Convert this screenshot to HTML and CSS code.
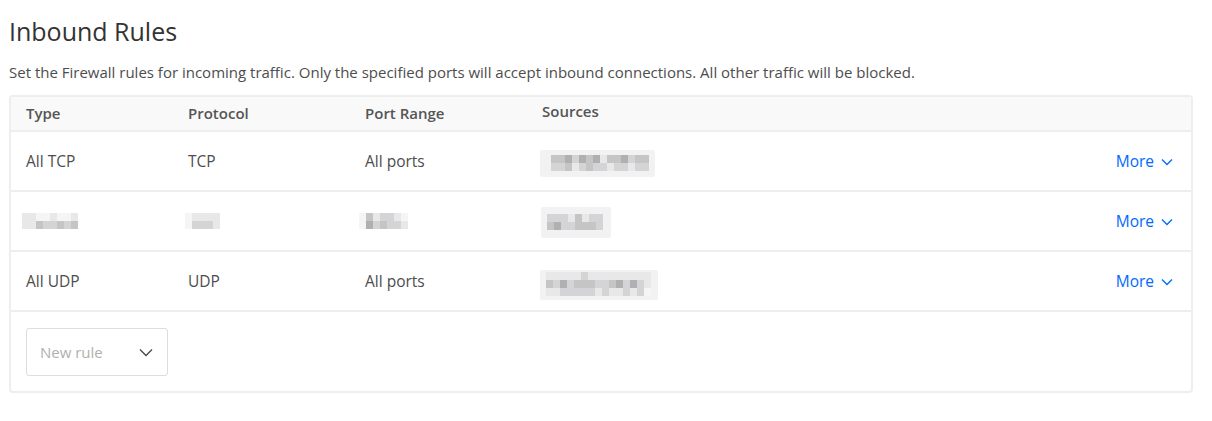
FILE: index.html
```html
<!DOCTYPE html>
<html>
<head>
<meta charset="utf-8">
<link rel="stylesheet" href="styles.css">
</head>
<body>
<div class="page">
  <h1 class="title">Inbound Rules</h1>
  <p class="desc">Set the Firewall rules for incoming traffic. Only the specified ports will accept inbound connections. All other traffic will be blocked.</p>
  <div class="table">
    <div class="row head">
      <div class="c type">Type</div>
      <div class="c proto">Protocol</div>
      <div class="c port">Port Range</div>
      <div class="c src src-h">Sources</div>
      <div class="c more"></div>
    </div>
    <div class="row">
      <div class="c type">All TCP</div>
      <div class="c proto">TCP</div>
      <div class="c port">All ports</div>
      <div class="c src">
        <div class="chip chip1">
          <div class="pix">
            <i class="g2"></i><i class="g2"></i><i class="g3"></i><i class="g1"></i><i class="g3"></i><i class="g2"></i><i class="g3"></i><i class="g0"></i><i class="g2"></i><i class="g2"></i><i class="g3"></i><i class="g1"></i><i class="g2"></i><i class="g2"></i>
            <i class="g1"></i><i class="g1"></i><i class="g2"></i><i class="g0"></i><i class="g1"></i><i class="g2"></i><i class="g1"></i><i class="g1"></i><i class="g0"></i><i class="g1"></i><i class="g1"></i><i class="g0"></i><i class="g1"></i><i class="g1"></i>
          </div>
        </div>
      </div>
      <div class="c more"><span class="more-link">More <svg width="12" height="8" viewBox="0 0 12 8"><path d="M1 1.5l5 5 5-5" fill="none" stroke="currentColor" stroke-width="1.3"/></svg></span></div>
    </div>
    <div class="row">
      <div class="c type"><div class="pix pix-t"><i class="g0"></i><i class="g0"></i><i class="gw"></i><i class="gw"></i><i class="g0"></i><i class="gw"></i><i class="gw"></i><i class="g0"></i><i class="g0"></i><i class="g0"></i><i class="g2"></i><i class="g1"></i><i class="g1"></i><i class="g2"></i><i class="g1"></i><i class="g2"></i></div></div>
      <div class="c proto"><div class="pix pix-p"><i class="gw"></i><i class="g0"></i><i class="g0"></i><i class="g0"></i><i class="g0"></i><i class="gw"></i><i class="g1"></i><i class="g1"></i><i class="g1"></i><i class="g0"></i></div></div>
      <div class="c port"><div class="pix pix-r"><i class="gw"></i><i class="g2"></i><i class="g0"></i><i class="g1"></i><i class="g1"></i><i class="g0"></i><i class="gw"></i><i class="gw"></i><i class="g3"></i><i class="g1"></i><i class="g2"></i><i class="g1"></i><i class="g1"></i><i class="g0"></i></div></div>
      <div class="c src">
        <div class="chip chip2">
          <div class="pix">
            <i class="g1"></i><i class="g1"></i><i class="g1"></i><i class="g0"></i><i class="g2"></i><i class="g0"></i><i class="g1"></i><i class="g1"></i>
            <i class="g2"></i><i class="g3"></i><i class="g1"></i><i class="g1"></i><i class="g2"></i><i class="g2"></i><i class="g2"></i><i class="g1"></i>
          </div>
        </div>
      </div>
      <div class="c more"><span class="more-link">More <svg width="12" height="8" viewBox="0 0 12 8"><path d="M1 1.5l5 5 5-5" fill="none" stroke="currentColor" stroke-width="1.3"/></svg></span></div>
    </div>
    <div class="row">
      <div class="c type">All UDP</div>
      <div class="c proto">UDP</div>
      <div class="c port">All ports</div>
      <div class="c src">
        <div class="chip chip3">
          <div class="pix">
            <i class="g0"></i><i class="g0"></i><i class="g0"></i><i class="g0"></i><i class="g0"></i><i class="g1"></i><i class="g0"></i><i class="g0"></i><i class="g0"></i><i class="g0"></i><i class="g0"></i><i class="g0"></i><i class="g0"></i><i class="g0"></i><i class="g0"></i>
            <i class="g2"></i><i class="g1"></i><i class="g3"></i><i class="g1"></i><i class="g2"></i><i class="g2"></i><i class="g2"></i><i class="g1"></i><i class="g1"></i><i class="g2"></i><i class="g3"></i><i class="g1"></i><i class="g3"></i><i class="g1"></i><i class="g0"></i>
            <i class="g0"></i><i class="g0"></i><i class="g1"></i><i class="g1"></i><i class="g1"></i><i class="g1"></i><i class="g1"></i><i class="g0"></i><i class="g1"></i><i class="g0"></i><i class="g0"></i><i class="g1"></i><i class="g0"></i><i class="g1"></i><i class="gw"></i>
          </div>
        </div>
      </div>
      <div class="c more"><span class="more-link">More <svg width="12" height="8" viewBox="0 0 12 8"><path d="M1 1.5l5 5 5-5" fill="none" stroke="currentColor" stroke-width="1.3"/></svg></span></div>
    </div>
    <div class="foot">
      <div class="select">
        <span>New rule</span>
        <svg width="14" height="9" viewBox="0 0 14 9"><path d="M1 1.5l6 6 6-6" fill="none" stroke="#4a4a4a" stroke-width="1.4"/></svg>
      </div>
    </div>
  </div>
</div>
</body>
</html>
```
FILE: styles.css
```css
* { box-sizing: border-box; }
body {
  margin: 0;
  background: #fff;
  font-family: "Open Sans", "Liberation Sans", sans-serif;
  color: #444;
}
.page { padding: 16px 20px 0 9px; }
.title {
  margin: 0;
  font-size: 25px;
  font-weight: 400;
  color: #333;
  line-height: 30px;
}
.desc {
  margin: 16px 0 0;
  font-size: 15px;
  line-height: 20px;
  color: #4d4d4d;
}
.table {
  margin-top: 13px;
  width: 1184px;
  border: 2px solid #eee;
  border-radius: 4px;
}
.row {
  display: flex;
  align-items: center;
  height: 60px;
  border-bottom: 2px solid #eee;
  font-size: 15.5px;
  color: #4d4d4d;
}
.row.head {
  height: 35px;
  padding-bottom: 2px;
  background: #f9f9f9;
  font-weight: 600;
  font-size: 15px;
  color: #555;
}
.c { flex: none; }
.type { width: 177px; padding-left: 15px; }
.proto { width: 177px; }
.port { width: 177px; }
.src { width: 400px; }
.src-h { margin-top: -4px; }
.more { flex: 1; display: flex; justify-content: flex-end; padding-right: 18px; }
.more-link {
  color: #0069ff;
  display: inline-flex;
  align-items: center;
  gap: 7px;
}
.more-link svg { margin-top: 1px; }

.chip {
  display: inline-block;
  background: #f2f2f2;
  border-radius: 2px;
}
.chip1 { margin-left: -2px; padding: 5px 6px 6px 11px; }
.chip2 { margin-left: -1px; padding: 7px 8px 8px 6px; }
.chip3 { margin-left: -2px; padding: 2px 7px 4px 6px; }
.pix { display: grid; grid-auto-rows: 8px; }
.pix i { display: block; }
.chip1 .pix { grid-template-columns: repeat(14, 7px); }
.chip2 .pix { grid-template-columns: repeat(8, 7px); }
.chip3 .pix { grid-template-columns: repeat(15, 7px); }
.pix-t { grid-template-columns: repeat(8, 7px); margin-left: -4px; }
.pix-p { grid-template-columns: repeat(5, 7px); margin-left: -3px; }
.pix-r { grid-template-columns: repeat(7, 7px); margin-left: -6px; }
.g0 { background: #e8e8e8; }
.g1 { background: #d4d4d6; }
.g2 { background: #c6c5c6; }
.g3 { background: #b0b0b3; }
.gw { background: #f5f5f5; }

.foot { height: 79px; padding: 16px 0 0 15px; }
.select {
  width: 142px;
  height: 48px;
  border: 1px solid #ddd;
  border-radius: 3px;
  display: flex;
  align-items: center;
  justify-content: space-between;
  padding: 0 14px 0 13px;
  font-size: 15px;
  color: #b0b0b0;
}
```
